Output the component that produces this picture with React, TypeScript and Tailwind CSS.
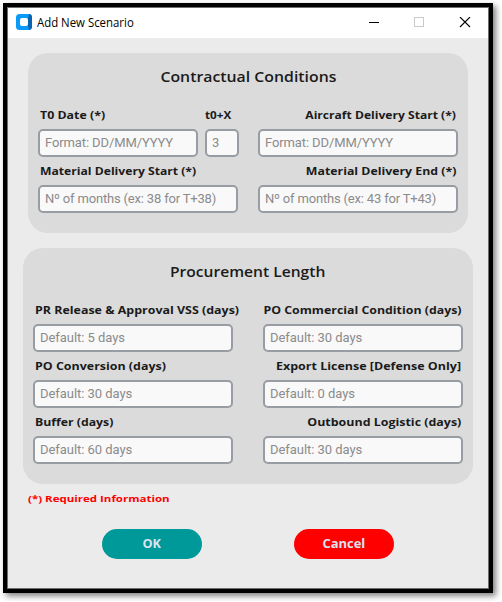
import type { ReactNode } from 'react';

function Label({ children, className = '' }: { children: ReactNode; className?: string }) {
  return (
    <span className={`block w-max whitespace-nowrap text-[11px] leading-4 font-bold text-[#1a1a1a] ${className}`}>
      {children}
    </span>
  );
}

function Input({ placeholder, className = 'w-[200px]' }: { placeholder: string; className?: string }) {
  return (
    <input
      placeholder={placeholder}
      className={`block h-7 rounded-[5px] border-2 border-[#979da2] bg-[#f9f9fa] px-[5px] pb-px font-['Roboto',sans-serif] text-[13px] outline-none placeholder:text-[#8b8b8b] ${className}`}
    />
  );
}

type FieldProps = {
  label: string;
  placeholder: string;
  right?: boolean;
  labelClass?: string;
  inputClass?: string;
};

function Field({ label, placeholder, right = false, labelClass = 'scale-x-[1.13]', inputClass = 'w-[200px] tracking-[-0.05px]' }: FieldProps) {
  return (
    <div className="flex w-[200px] flex-col">
      <div className={`flex h-7 px-0.5 pt-1.5 ${right ? 'justify-end' : ''}`}>
        <Label className={`${right ? 'origin-right' : 'origin-left'} ${labelClass}`}>{label}</Label>
      </div>
      <Input placeholder={placeholder} className={inputClass} />
    </div>
  );
}

function TitleBar() {
  return (
    <header className="flex h-[30px] items-center bg-white pl-2">
      <svg width="16" height="16" viewBox="0 0 16 16" className="-mt-0.5 shrink-0">
        <rect width="16" height="16" rx="3.5" fill="#0a9bfa" />
        <path d="M13 0.1A3.5 3.5 0 0 1 16 3.5v9a3.5 3.5 0 0 1-3 3.4L12 12V4z" fill="#0863b0" />
        <rect x="4" y="4" width="8" height="8" rx="2" fill="#fff" />
      </svg>
      <span className="ml-[5px] origin-left scale-x-[0.95] whitespace-nowrap text-[12px] leading-4 text-black">Add New Scenario</span>
      <svg width="103" height="12" viewBox="0 0 103 12" className="ml-auto mr-[17px] shrink-0" fill="none" shapeRendering="crispEdges">
        <path d="M1 5.5h10" stroke="#000" />
        <rect x="46.5" y="0.5" width="9" height="9" stroke="#cacaca" />
        <path d="M92 0l10 10M102 0L92 10" stroke="#000" strokeWidth="1.1" shapeRendering="auto" />
      </svg>
    </header>
  );
}

export default function App() {
  return (
    <div className="h-[602px] w-[502px] overflow-hidden bg-white p-[3px] font-['Open_Sans','Noto_Sans',sans-serif]">
      <div className="h-[590px] w-[490px] border-4 border-black shadow-[3px_3px_6px_rgba(0,0,0,0.5)]">
        <main className="flex h-[582px] w-[482px] flex-col border border-[#6e6e6e] bg-[#ebebeb]">
          <TitleBar />
          <section className="mx-5 mt-[15px] h-[180px] rounded-[20px] bg-[#dbdbdb] px-2.5">
            <h2 className="flex h-12 items-center justify-center pb-px text-[15px] font-semibold text-[#1a1a1a]">
              <span className="scale-x-[1.055] whitespace-nowrap">Contractual Conditions</span>
            </h2>
            <div className="flex justify-between">
              <div className="flex w-[201px] justify-between">
                <div>
                  <div className="flex h-7 px-0.5 pt-1.5"><Label className="origin-left scale-x-[1.125]">T0 Date (*)</Label></div>
                  <Input placeholder="Format: DD/MM/YYYY" className="w-[160px] tracking-[-0.11px]" />
                </div>
                <div>
                  <div className="flex h-7 pt-1.5"><Label className="origin-left scale-x-[1.06]">t0+X</Label></div>
                  <Input placeholder="3" className="w-[34px]" />
                </div>
              </div>
              <Field label="Aircraft Delivery Start (*)" placeholder="Format: DD/MM/YYYY" right labelClass="scale-x-[1.1]" inputClass="w-[200px] tracking-[-0.11px]" />
            </div>
            <div className="flex justify-between">
              <Field label="Material Delivery Start (*)" placeholder="Nº of months (ex: 38 for T+38)" labelClass="scale-x-[1.105]" inputClass="w-[200px] tracking-[-0.18px]" />
              <Field label="Material Delivery End (*)" placeholder="Nº of months (ex: 43 for T+43)" right labelClass="scale-x-[1.12]" inputClass="w-[200px] tracking-[-0.18px]" />
            </div>
          </section>
          <section className="mx-[15px] mt-[15px] h-[236px] rounded-[20px] bg-[#dbdbdb] px-2.5">
            <h2 className="flex h-12 items-center justify-center pb-px text-[15px] font-semibold text-[#1a1a1a]">
              <span className="scale-x-[1.04] whitespace-nowrap">Procurement Length</span>
            </h2>
            <div className="grid grid-cols-[200px_200px] justify-between">
              <Field label="PR Release & Approval VSS (days)" placeholder="Default: 5 days" />
              <Field label="PO Commercial Condition (days)" placeholder="Default: 30 days" right labelClass="scale-x-[1.122]" />
              <Field label="PO Conversion (days)" placeholder="Default: 30 days" />
              <Field label="Export License [Defense Only]" placeholder="Default: 0 days" right labelClass="scale-x-[1.135]" />
              <Field label="Buffer (days)" placeholder="Default: 60 days" labelClass="scale-x-[1.115]" />
              <Field label="Outbound Logistic (days)" placeholder="Default: 30 days" right labelClass="scale-x-[1.13]" />
            </div>
          </section>
          <p className="mt-[7px] ml-5 h-4 w-max origin-left scale-x-[1.21] text-[9.5px] leading-4 font-bold text-[#ff0000]">(*) Required Information</p>
          <div className="mt-[22px] flex justify-between px-[94px]">
            <button className="flex h-[30px] w-[100px] items-center justify-center rounded-full bg-[#009999] text-[12px] font-bold text-[#dce4ee]">
              <span className="scale-x-[1.06]">OK</span>
            </button>
            <button className="flex h-[30px] w-[100px] items-center justify-center rounded-full bg-[#ff0000] text-[12px] font-bold text-[#dce4ee]">
              <span className="scale-x-[1.08]">Cancel</span>
            </button>
          </div>
        </main>
      </div>
    </div>
  );
}
